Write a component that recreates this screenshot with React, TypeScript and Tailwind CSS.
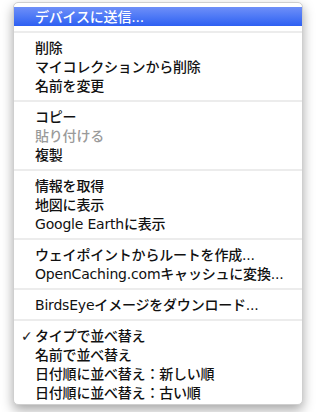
import React from "react";

type Item = { label?: string; sep?: boolean; disabled?: boolean; checked?: boolean; active?: boolean };

const items: Item[] = [
  { label: "デバイスに送信...", active: true },
  { sep: true },
  { label: "削除" },
  { label: "マイコレクションから削除" },
  { label: "名前を変更" },
  { sep: true },
  { label: "コピー" },
  { label: "貼り付ける", disabled: true },
  { label: "複製" },
  { sep: true },
  { label: "情報を取得" },
  { label: "地図に表示" },
  { label: "Google Earthに表示" },
  { sep: true },
  { label: "ウェイポイントからルートを作成..." },
  { label: "OpenCaching.comキャッシュに変換..." },
  { sep: true },
  { label: "BirdsEyeイメージをダウンロード..." },
  { sep: true },
  { label: "タイプで並べ替え", checked: true },
  { label: "名前で並べ替え" },
  { label: "日付順に並べ替え：新しい順" },
  { label: "日付順に並べ替え：古い順" },
];

export default function App() {
  return (
    <div
      className="w-[317px] h-[412px] bg-white relative"
      style={{ fontFamily: '"DejaVu Sans", "Noto Sans CJK JP", sans-serif' }}
    >
      <div className="absolute left-[13px] top-[2px] w-[290px] h-[403px] bg-white rounded-[5px] border border-[#cfcfcf] shadow-[0_5px_12px_rgba(0,0,0,0.35)] pt-[4px] pb-[2px] flex flex-col">
        {items.map((it, i) =>
          it.sep ? (
            <div key={i} className="h-[12px] flex items-center">
              <div className="w-full h-[2px] bg-[#ececec]" />
            </div>
          ) : (
            <div
              key={i}
              className={
                "h-[19px] flex items-center relative text-[14px] leading-none pl-[21px] font-medium tracking-[-0.2px] " +
                (it.active
                  ? "bg-gradient-to-b from-[#6e8ff8] to-[#2d5ff2] text-white"
                  : it.disabled
                  ? "text-[#9a9a9a]"
                  : "text-[#111111]")
              }
            >
              {it.checked && (
                <span className="absolute left-[7px] text-[14px] font-bold text-[#222]">✓</span>
              )}
              <span>{it.label}</span>
            </div>
          )
        )}
      </div>
    </div>
  );
}
